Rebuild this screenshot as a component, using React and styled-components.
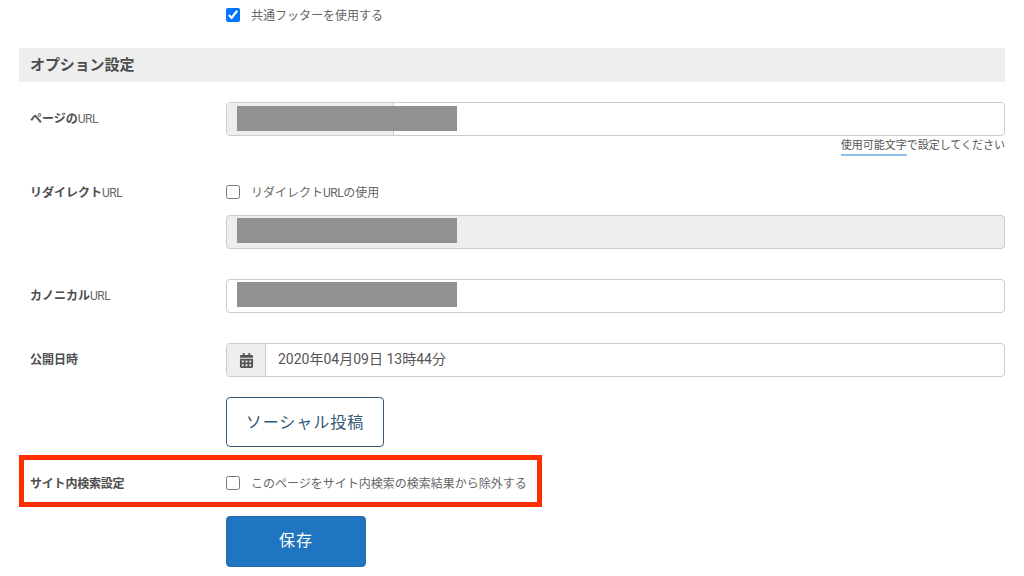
import React from 'react';
import styled, { createGlobalStyle } from 'styled-components';
import { FaCalendarAlt } from 'react-icons/fa';

const GlobalStyle = createGlobalStyle`
  html, body {
    margin: 0;
    padding: 0;
    height: 576px;
    overflow: hidden;
    background: #fff;
  }
  body {
    font-family: Roboto, "Noto Sans CJK JP", sans-serif;
    color: #555;
  }
`;

const Page = styled.div`
  padding: 8px 19px 0;
`;

const Row = styled.div`
  display: grid;
  grid-template-columns: 207px 1fr;
  margin-top: ${props => props.gap || 0}px;
`;

const Latin = styled.span`
  letter-spacing: -0.5px;
  font-weight: 400;
`;

const Label = styled.div`
  padding-left: 11px;
  font-size: 12px;
  font-weight: 700;
  line-height: 14px;
  padding-top: ${props => props.top || 0}px;
  color: #4d4d4d;

  ${Latin} {
    color: #666;
  }
`;

const CheckRow = styled.label`
  display: flex;
  align-items: center;
  gap: 11px;
  height: 14px;
  font-size: 12px;
  line-height: 14px;
  color: #666;
`;

const CheckText = styled.span`
  padding-top: 2px;
`;

const Check = styled.input.attrs({ type: 'checkbox' })`
  width: 14px;
  height: 14px;
  margin: 0;
  flex: none;
`;

const SectionTitle = styled.h2`
  margin: 26px 0 0;
  height: 34px;
  padding-left: 11px;
  background: #eee;
  font-size: 15px;
  font-weight: 700;
  line-height: 34px;
  letter-spacing: -0.1px;
  color: #4d4d4d;
`;

const InputGroup = styled.div`
  position: relative;
  display: flex;
  height: 34px;
  box-sizing: border-box;
  border: 1px solid #ccc;
  border-radius: 4px;
  overflow: hidden;
  background: ${props => (props.disabled ? '#eee' : '#fff')};
  margin-top: ${props => props.gap || 0}px;
`;

const Addon = styled.div`
  flex: none;
  display: flex;
  align-items: center;
  justify-content: center;
  box-sizing: border-box;
  width: ${props => props.width}px;
  background: #eee;
  border-right: 1px solid #ccc;
  color: #555;
  font-size: 15px;
`;

const TextValue = styled.div`
  flex: 1;
  padding-left: 12px;
  font-size: 14px;
  line-height: 31px;
  color: #555;
`;

// grey block laid over the masked part of a field
const Redaction = styled.div`
  position: absolute;
  left: 10px;
  top: ${props => props.top}px;
  width: 220px;
  height: 25px;
  background: #919191;
`;

const Help = styled.div`
  display: flex;
  justify-content: flex-end;
  height: 19px;
  margin-top: 3px;
  font-size: 11px;
  line-height: 14px;
  color: #555;

  em {
    font-style: normal;
    padding-bottom: 2px;
    border-bottom: 2px solid #8cc0ee;
  }
`;

const OutlineButton = styled.button`
  display: block;
  width: 158px;
  height: 50px;
  margin: 20px 0 0 207px;
  padding: 0 0 3px;
  box-sizing: border-box;
  background: #fff;
  border: 1px solid #355a78;
  border-radius: 4px;
  font-family: inherit;
  font-size: 16px;
  letter-spacing: 1px;
  color: #355a78;
`;

const Highlight = styled.div`
  display: grid;
  grid-template-columns: 202px auto;
  align-items: center;
  box-sizing: border-box;
  width: 523px;
  height: 52px;
  margin-top: 8px;
  padding-top: 4px;
  border: 5px solid #ff2d00;
`;

const HighlightLabel = styled(Label)`
  padding-left: 6px;
  padding-top: 1px;
  letter-spacing: -0.2px;
`;

const SaveButton = styled.button`
  display: block;
  width: 140px;
  height: 51px;
  margin: 9px 0 0 207px;
  padding: 0 0 5px;
  background: #2075c0;
  border: 1px solid #1d6bb0;
  border-radius: 4px;
  font-family: inherit;
  font-size: 16px;
  letter-spacing: 1px;
  color: #fff;
`;

export default function App() {
  return (
    <Page>
      <GlobalStyle />
      <Row>
        <div />
        <CheckRow>
          <Check defaultChecked />
          <CheckText>共通フッターを使用する</CheckText>
        </CheckRow>
      </Row>

      <SectionTitle>オプション設定</SectionTitle>

      <Row gap={20}>
        <Label top={10}>ページの<Latin>URL</Latin></Label>
        <div>
          <InputGroup>
            <Addon width={167} />
            <Redaction top={3} />
          </InputGroup>
          <Help><span><em>使用可能文字</em>で設定してください</span></Help>
        </div>
      </Row>

      <Row gap={27}>
        <Label top={1}>リダイレクト<Latin>URL</Latin></Label>
        <div>
          <CheckRow>
            <Check />
            <CheckText>リダイレクト<Latin>URL</Latin>の使用</CheckText>
          </CheckRow>
          <InputGroup disabled gap={16}>
            <Redaction top={2} />
          </InputGroup>
        </div>
      </Row>

      <Row gap={30}>
        <Label top={10}>カノニカル<Latin>URL</Latin></Label>
        <InputGroup>
          <Redaction top={2} />
        </InputGroup>
      </Row>

      <Row gap={30}>
        <Label top={10}>公開日時</Label>
        <InputGroup>
          <Addon width={39}><FaCalendarAlt /></Addon>
          <TextValue>2020年04月09日 13時44分</TextValue>
        </InputGroup>
      </Row>

      <OutlineButton>ソーシャル投稿</OutlineButton>

      <Highlight>
        <HighlightLabel>サイト内検索設定</HighlightLabel>
        <CheckRow>
          <Check />
          <CheckText>このページをサイト内検索の検索結果から除外する</CheckText>
        </CheckRow>
      </Highlight>

      <SaveButton>保存</SaveButton>
    </Page>
  );
}
